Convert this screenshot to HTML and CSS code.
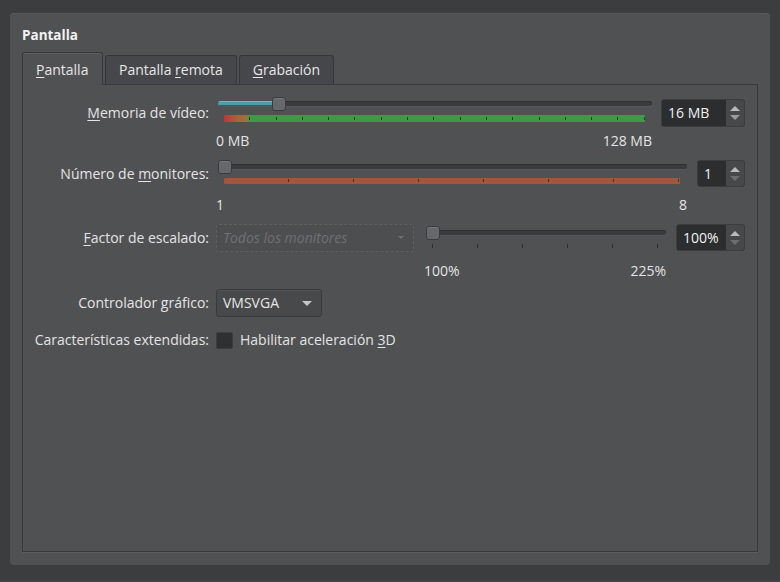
FILE: index.html
```html
<!DOCTYPE html>
<html>
<head>
    <link rel="stylesheet" href="styles.css">
</head>
<body>
    <div class="frame">
        <div class="panel">
            <div class="panel-title">Pantalla</div>
            <div class="tabs">
                <div class="tab active"><u>P</u>antalla</div>
                <div class="tab">Pantalla <u>r</u>emota</div>
                <div class="tab"><u>G</u>rabación</div>
            </div>
            <div class="pane">
                <!-- Memoria de vídeo -->
                <div class="row row-mem">
                    <label class="lbl"><u>M</u>emoria de vídeo:</label>
                    <div class="line">
                        <div class="slider slider-mem">
                            <div class="groove"><div class="fill" style="width: 58px;"></div></div>
                            <div class="handle" style="left: 54px;"></div>
                            <div class="tickbar tickbar-mem"></div>
                        </div>
                        <div class="spin spin-mem">
                            <span class="spin-text">16 MB</span>
                            <span class="spin-btns"><i class="up"></i><i class="down"></i></span>
                        </div>
                    </div>
                </div>
                <div class="row scale-row scale-mem">
                    <span></span>
                    <div class="scale scale-w-mem"><span>0 MB</span><span>128 MB</span></div>
                </div>

                <!-- Número de monitores -->
                <div class="row row-mon">
                    <label class="lbl">Número de <u>m</u>onitores:</label>
                    <div class="line">
                        <div class="slider slider-mon">
                            <div class="groove"></div>
                            <div class="handle" style="left: 0px;"></div>
                            <div class="tickbar tickbar-mon"></div>
                        </div>
                        <div class="spin spin-mon">
                            <span class="spin-text">1</span>
                            <span class="spin-btns dim"><i class="up"></i><i class="down"></i></span>
                        </div>
                    </div>
                </div>
                <div class="row scale-row scale-mon">
                    <span></span>
                    <div class="scale scale-w-mon"><span>1</span><span>8</span></div>
                </div>

                <!-- Factor de escalado -->
                <div class="row row-scale">
                    <label class="lbl"><u>F</u>actor de escalado:</label>
                    <div class="line">
                        <div class="combo combo-disabled">
                            <span>Todos los monitores</span>
                            <i class="arrow"></i>
                        </div>
                        <div class="slider slider-scale">
                            <div class="groove"></div>
                            <div class="handle" style="left: 0px;"></div>
                            <div class="ticks-under"></div>
                        </div>
                        <div class="spin spin-scale">
                            <span class="spin-text">100%</span>
                            <span class="spin-btns dim"><i class="up"></i><i class="down"></i></span>
                        </div>
                    </div>
                </div>
                <div class="row scale-row scale-fac">
                    <span></span>
                    <div class="scale scale-w-fac"><span>100%</span><span>225%</span></div>
                </div>

                <!-- Controlador gráfico -->
                <div class="row row-ctrl">
                    <label class="lbl">Controlador gráfico:</label>
                    <div class="line">
                        <div class="combo combo-vga">
                            <span>VMSVGA</span>
                            <i class="arrow"></i>
                        </div>
                    </div>
                </div>

                <!-- Características extendidas -->
                <div class="row row-ext">
                    <label class="lbl">Características extendidas:</label>
                    <div class="line">
                        <span class="check"></span>
                        <span class="check-label">Habilitar aceleración <u>3</u>D</span>
                    </div>
                </div>
            </div>
        </div>
    </div>
    <div class="statusbar"></div>
</body>
</html>
```

FILE: styles.css
```css
body {
    margin: 0;
    height: 582px;
    overflow: hidden;
    background: #3c3d3e;
    font-family: "Open Sans", "Noto Sans", sans-serif;
    font-size: 14px;
    color: #e4e4e4;
}
u {
    text-decoration: underline;
    text-underline-offset: 2px;
}
.frame {
    padding: 13px 10px 0 10px;
}
.panel {
    height: 552px;
    box-sizing: border-box;
    background: #505153;
    border-radius: 4px;
    box-shadow: inset 0 1px 0 #58595b;
    padding: 8px 12px 13px 12px;
    display: flex;
    flex-direction: column;
}
.panel-title {
    font-weight: bold;
    font-size: 13.5px;
    color: #f2f2f2;
    line-height: 28px;
    height: 28px;
    margin-bottom: 3px;
}
.tabs {
    display: flex;
    align-items: flex-end;
    height: 32px;
    gap: 2px;
    position: relative;
    z-index: 1;
}
.tab {
    height: 29px;
    line-height: 28px;
    padding: 0 13px;
    background: #46474a;
    border: 1px solid #353638;
    border-bottom: none;
    border-radius: 3px 3px 0 0;
    box-sizing: border-box;
    color: #e6e6e6;
    white-space: nowrap;
}
.tab.active {
    height: 33px;
    line-height: 34px;
    background: #505153;
    border-color: #38393b;
    box-shadow: inset 0 1px 0 #5e5f61;
    margin-bottom: -1px;
    width: 81px;
}
.pane {
    flex: 1;
    border: 1px solid #38393b;
    box-shadow: 0 1px 0 #5b5c5e;
    background: #505153;
    padding: 14px 12px 0 0;
}

/* form rows */
.row {
    display: grid;
    grid-template-columns: 186px 1fr;
    column-gap: 7px;
    align-items: center;
    line-height: 18px;
}
.lbl {
    text-align: right;
    white-space: nowrap;
}
.line {
    display: flex;
    align-items: flex-start;
}
.row-mem .line { height: 28px; }
.row-mon { margin-top: 11px; }
.row-mon .line { height: 27px; }
.row-scale { margin-top: 11px; }
.row-scale .line { height: 28px; }
.row-ctrl { margin-top: 10px; }
.row-ctrl .line { height: 28px; }
.row-ext { margin-top: 11px; }
.row-ext .line { height: 24px; align-items: center; }

.scale-row .scale {
    display: flex;
    justify-content: space-between;
    line-height: 16px;
}
.scale-mem { margin-top: 6px; }
.scale-mon { margin-top: 10px; }
.scale-fac { margin-top: 11px; }
.scale-w-mem { width: 436px; }
.scale-w-mon { width: 471px; }
.scale-w-fac { width: 242px; margin-left: 208px; }

/* sliders */
.slider {
    position: relative;
    flex: none;
}
.groove {
    height: 5px;
    background: #3a3b3d;
    border-radius: 3px;
    box-shadow: inset 0 1px 0 #2f3032, 0 1px 0 #56575a;
    overflow: hidden;
}
.fill {
    height: 100%;
    background: #4d9ca8;
    box-shadow: inset 0 1px 0 #6fb7c2, inset 0 -1px 0 #2e5f66;
}
.handle {
    position: absolute;
    width: 14px;
    height: 14px;
    box-sizing: border-box;
    background: #67686b;
    border: 1px solid #3a3b3d;
    border-radius: 3px;
    box-shadow: inset 0 1px 0 #76777a;
}
.slider-mem {
    width: 434px;
    margin-left: 2px;
    padding-top: 2px;
}
.slider-mem .handle { top: -2px; }
.slider-mon {
    width: 469px;
    margin-left: 2px;
    padding-top: 4px;
}
.slider-mon .handle { top: 0; }
.slider-scale {
    width: 240px;
    margin-left: 12px;
    padding-top: 6px;
}
.slider-scale .handle { top: 2px; }

.tickbar {
    margin: 9px 7px 0 6px;
    height: 7px;
    border-radius: 1px;
}
.tickbar-mem {
    background:
        repeating-linear-gradient(90deg, transparent 0, transparent 25.3px, #2e3a2e 25.3px, #2e3a2e 26.3px) 0 2px / 100% 3px no-repeat,
        linear-gradient(90deg, #c8303a 0, #b44a3a 6px, #a7653c 14px, #a0703c 22px, #3f9a47 26px, #3f9a47 100%);
}
.tickbar-mon {
    margin-top: 9px;
    height: 6px;
    background:
        repeating-linear-gradient(90deg, transparent 0, transparent 64px, #4b2d22 64px, #4b2d22 65px) 0 1px / 100% 3px no-repeat,
        #a0573a;
}
.ticks-under {
    margin: 9px 8px 0 6px;
    height: 4px;
    background: repeating-linear-gradient(90deg, #2e2f31 0, #2e2f31 1px, transparent 1px, transparent 45px);
}

/* spin boxes */
.spin {
    display: flex;
    height: 28px;
    box-sizing: border-box;
    background: #2c2d2f;
    border: 1px solid #3b3c3e;
    border-radius: 3px;
    flex: none;
}
.spin-text {
    flex: 1;
    padding-left: 6px;
    line-height: 26px;
    font-size: 14px;
    color: #f0f0f0;
}
.spin-btns {
    width: 18px;
    background: #47484a;
    border-radius: 0 2px 2px 0;
    display: flex;
    flex-direction: column;
    align-items: center;
    justify-content: center;
    gap: 4px;
}
.spin-btns i {
    width: 0;
    height: 0;
    border-left: 5px solid transparent;
    border-right: 5px solid transparent;
}
.spin-btns .up { border-bottom: 5px solid #b9babc; }
.spin-btns .down { border-top: 5px solid #9a9b9d; }
.spin-btns.dim .down { border-top-color: #6c6d6f; }
.spin-mem { width: 84px; margin-left: 9px; }
.spin-mon { width: 48px; margin-left: 10px; height: 27px; }
.spin-scale { width: 69px; margin-left: 10px; height: 27px; }

/* combos */
.combo {
    position: relative;
    height: 28px;
    box-sizing: border-box;
    border-radius: 3px;
    line-height: 26px;
    padding-left: 6px;
    flex: none;
    white-space: nowrap;
}
.combo .arrow {
    position: absolute;
    top: 11px;
    width: 0;
    height: 0;
    border-left: 5px solid transparent;
    border-right: 5px solid transparent;
    border-top: 5px solid #c4c5c7;
}
.combo-vga {
    width: 106px;
    background: #48494b;
    border: 1px solid #3a3b3d;
    box-shadow: inset 0 1px 0 #535456;
}
.combo-vga .arrow { right: 9px; }
.combo-disabled {
    width: 198px;
    border: 1px dashed #5f6062;
    background: #4d4e50;
    color: #6f7072;
    font-style: italic;
}
.combo-disabled .arrow {
    right: 9px;
    border-left-width: 3px;
    border-right-width: 3px;
    border-top: 3px solid #6e6f71;
}

/* checkbox */
.check {
    width: 17px;
    height: 17px;
    box-sizing: border-box;
    background: #2f3032;
    border: 1px solid #3c3d3f;
    border-radius: 2px;
}
.check-label {
    margin-left: 7px;
}

.statusbar {
    height: 15px;
    margin-top: 1px;
    border-bottom: 2px solid #4a4b4c;
}
```
